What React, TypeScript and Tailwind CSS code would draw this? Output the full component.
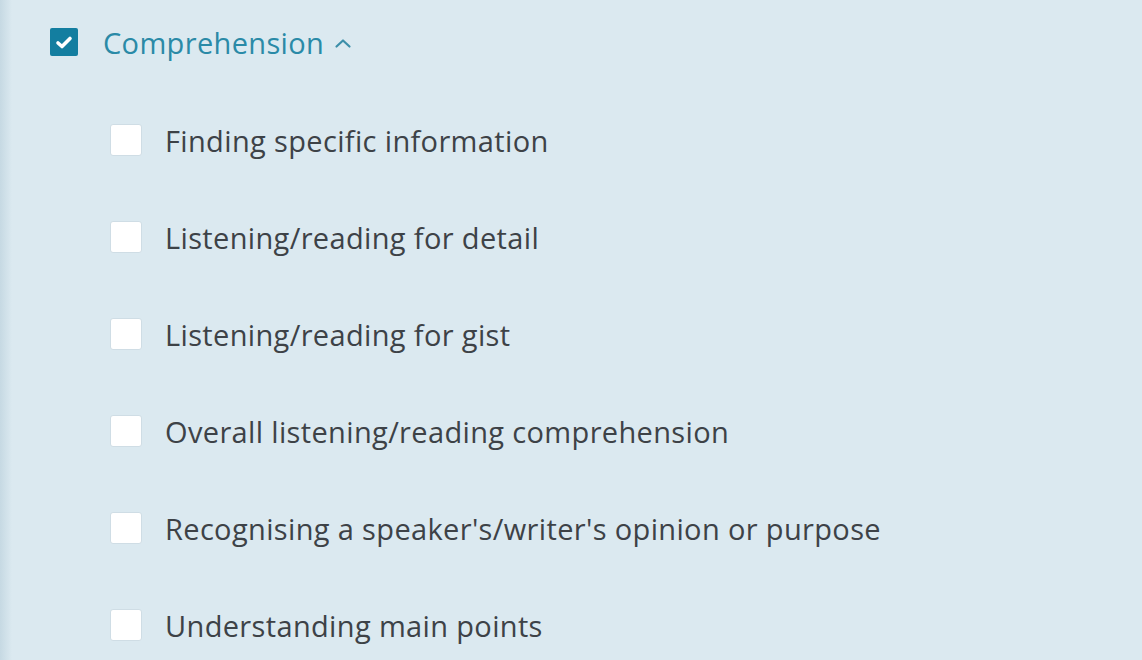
const items = [
  "Finding specific information",
  "Listening/reading for detail",
  "Listening/reading for gist",
  "Overall listening/reading comprehension",
  "Recognising a speaker's/writer's opinion or purpose",
  "Understanding main points",
];

export default function App() {
  return (
    <div
      className="w-[1142px] h-[660px] overflow-hidden bg-[#dbe9f0] flex"
      style={{ fontFamily: '"Open Sans", "Noto Sans", sans-serif' }}
    >
      <div className="w-[12px] shrink-0 bg-gradient-to-r from-[#c6d9e3] to-[#dbe9f0]" />
      <div className="flex flex-col pl-[38px] pt-[28px]">
        <div className="flex items-center h-[28px]">
          <div className="w-[28px] h-[28px] bg-[#137ea0] rounded-[2px] flex items-center justify-center">
            <svg width="18" height="15" viewBox="0 0 18 15">
              <path d="M3 8 L7 11.5 L15 3.5" fill="none" stroke="#fff" strokeWidth="3.6" strokeLinecap="round" strokeLinejoin="round" />
            </svg>
          </div>
          <span className="ml-[25px] text-[29px] tracking-[0.35px] leading-none text-[#2a8aa7]">Comprehension</span>
          <svg className="ml-[10px] mt-[2px]" width="18" height="12" viewBox="0 0 18 12">
            <path d="M2.5 9.5 L9 3.5 L15.5 9.5" fill="none" stroke="#3c8fa9" strokeWidth="2.2" strokeLinecap="round" strokeLinejoin="round" />
          </svg>
        </div>
        <div className="flex flex-col pl-[60px] pt-[68px] gap-[65px]">
          {items.map((t) => (
            <div key={t} className="flex items-center h-[32px]">
              <div className="w-[32px] h-[32px] bg-white border border-[#cfdde5] rounded-[3px] shrink-0" />
              <span className="ml-[23px] text-[29px] tracking-[0.35px] leading-none text-[#3d4247] whitespace-nowrap">{t}</span>
            </div>
          ))}
        </div>
      </div>
    </div>
  );
}
